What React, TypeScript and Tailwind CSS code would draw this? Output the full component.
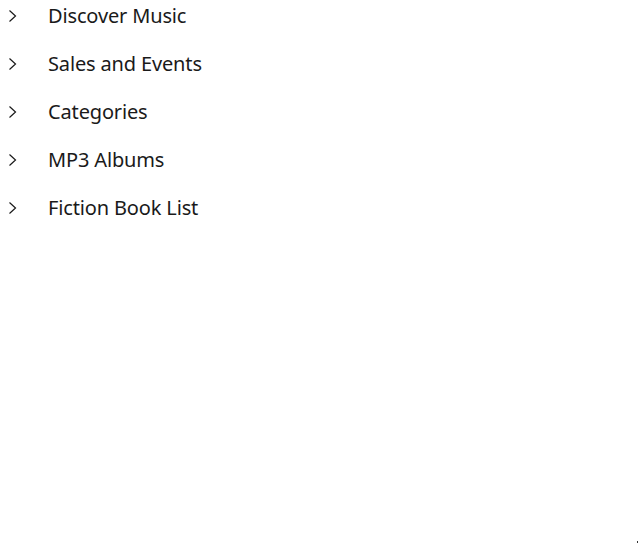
const items = ['Discover Music', 'Sales and Events', 'Categories', 'MP3 Albums', 'Fiction Book List'];

const Chevron = () => (
  <svg width="16" height="16" viewBox="0 0 16 16" className="shrink-0">
    <path d="M5.5 2.5 L11.5 8 L5.5 13.5" fill="none" stroke="#1a1a1a" strokeWidth="1.2" />
  </svg>
);

export default function App() {
  return (
    <div className="relative w-[639px] h-[545px] overflow-hidden bg-white text-[#1a1a1a]" style={{ fontFamily: '"Noto Sans", "Open Sans", sans-serif' }}>
      <ul className="-mt-[8px] flex flex-col">
        {items.map((label) => (
          <li key={label} className="flex h-12 items-center">
            <div className="w-12 pl-1 flex items-center">
              <Chevron />
            </div>
            <span className="text-[20px] leading-none tracking-[-0.15px]">{label}</span>
          </li>
        ))}
      </ul>
      <div className="absolute left-[637px] top-[541px] w-px h-[2px] bg-[#333]" />
    </div>
  );
}
